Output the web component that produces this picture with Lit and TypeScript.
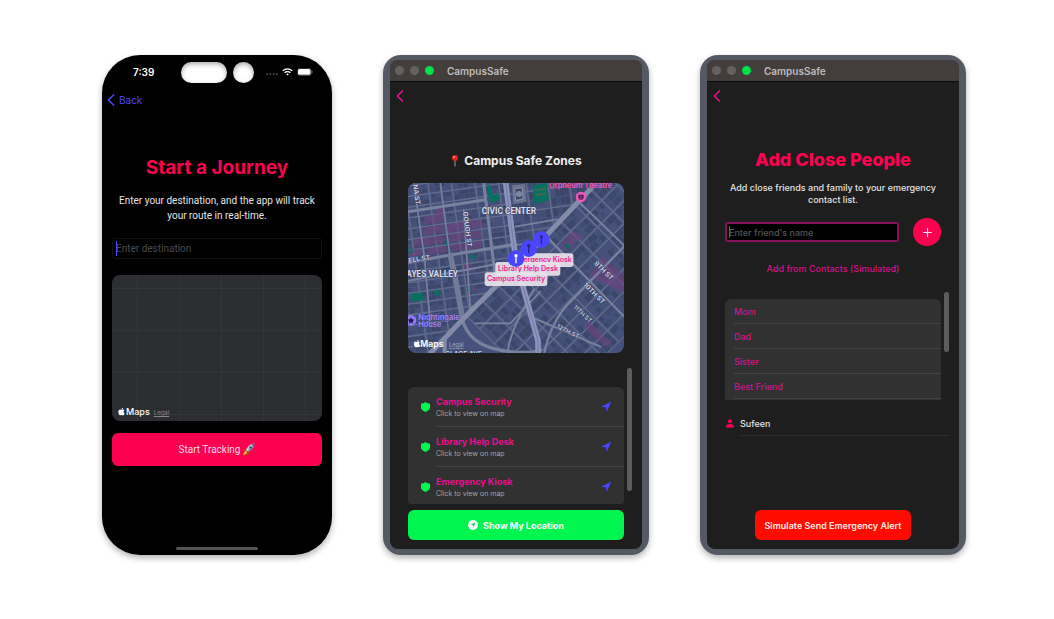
import { LitElement, html, svg, css } from "lit";
import { customElement } from "lit/decorators.js";

const shared = css`
  :host {
    display: block;
    font-family: Inter, "Open Sans", "Liberation Sans", sans-serif;
    --rose: #ff0050;
    --magenta: #e6108c;
    --blue: #4b45ff;
  }
  * {
    box-sizing: border-box;
  }
  h1, h2, p, ul {
    margin: 0;
    padding: 0;
  }
  ul {
    list-style: none;
  }
  button, input {
    font: inherit;
    color: inherit;
    border: 0;
    margin: 0;
    padding: 0;
    background: none;
    cursor: pointer;
  }
  input {
    display: block;
    cursor: text;
    outline: none;
    width: 100%;
  }
  svg {
    display: block;
    flex: none;
  }
`;

const apple = (size: number) => svg`
  <svg width=${size} height=${size} viewBox="0 0 24 24" fill="#fff" aria-hidden="true">
    <path d="M17.6 12.7c0-2.6 2.1-3.9 2.2-4-1.200-1.800-3.100-2-3.800-2-1.600-.2-3.100 1-3.900 1s-2.100-1-3.400-1c-1.700 0-3.400 1-4.300 2.600-1.800 3.200-.5 7.900 1.300 10.400.9 1.300 1.900 2.700 3.300 2.600 1.300-.1 1.800-.8 3.400-.8s2.100.8 3.500.8 2.300-1.300 3.200-2.500c1-1.500 1.400-2.900 1.400-3-.1 0-2.900-1-2.900-4.100z"/>
    <path d="M15 5c.7-.9 1.200-2.100 1.100-3.300-1 0-2.300.7-3 1.600-.7.7-1.200 2-1.100 3.100 1.100.1 2.300-.6 3-1.400z"/>
  </svg>`;

const chevron = html`
  <svg width="8" height="12" viewBox="0 0 8 12" fill="none" stroke="currentColor" stroke-width="1.700" stroke-linecap="round" stroke-linejoin="round" aria-hidden="true">
    <path d="M6.500 1 1.300 6l5.200 5"/>
  </svg>`;

@customElement("journey-phone")
class JourneyPhone extends LitElement {
  static styles = [shared, css`
    .phone {
      min-height: 500px;
      height: 100%;
      display: flex;
      flex-direction: column;
      padding: 6px 10px 5px;
      border-radius: 38px;
      background: #000;
      color: #e4e4e4;
      box-shadow: 0 3px 6px rgba(0, 0, 0, 0.3);
    }
    .status {
      display: flex;
      align-items: center;
      height: 22px;
      padding: 0 9px;
    }
    .time {
      flex: 1;
      text-indent: 12px;
      font-size: 10px;
      font-weight: 600;
      color: #fff;
    }
    .island {
      display: flex;
      gap: 6px;
    }
    .pill, .lens {
      height: 21px;
      width: 46px;
      border-radius: 11px;
      background: #fff;
      box-shadow: inset 0 2px 5px rgba(0, 0, 0, 0.35);
    }
    .lens {
      width: 21px;
    }
    .signals {
      flex: 1;
      min-width: 0;
      display: flex;
      justify-content: flex-end;
      align-items: center;
      gap: 4px;
    }
    .back {
      display: flex;
      align-items: center;
      align-self: flex-start;
      gap: 4px;
      height: 20px;
      margin: 7px 0 0 -5px;
      font-size: 10px;
      color: var(--blue);
    }
    h1 {
      margin-top: 46px;
      font-size: 19px;
      line-height: 24px;
      font-weight: 700;
      text-align: center;
      color: var(--rose);
    }
    .lead {
      margin-top: 13px;
      font-family: Roboto, Inter, sans-serif;
      font-size: 10px;
      line-height: 15px;
      text-align: center;
    }
    .field {
      position: relative;
      margin-top: 15px;
      border: 1px solid #121214;
      border-radius: 3px;
      padding: 0 3px;
    }
    .field input {
      height: 19px;
      font-family: Roboto, Inter, sans-serif;
      font-size: 10px;
    }
    .field input::placeholder {
      color: #4a4a4d;
      opacity: 1;
    }
    .caret {
      position: absolute;
      left: 3px;
      top: 2px;
      width: 1px;
      height: 15px;
      background: var(--blue);
    }
    .map {
      display: flex;
      align-items: flex-end;
      height: 146px;
      margin-top: 16px;
      padding: 0 5px 4px;
      border-radius: 8px;
      background-color: #2c2d30;
      background-image:
        linear-gradient(#30363a 1px, transparent 1px),
        linear-gradient(90deg, #30363a 1px, transparent 1px),
        linear-gradient(#2d2e31 1px, transparent 1px),
        linear-gradient(90deg, #2d2e31 1px, transparent 1px);
      background-size: 42px 42px, 42px 42px, 4px 4px, 4px 4px;
      background-position: 0 13px, 25px 0, 0 0, 0 0;
    }
    .brand {
      display: flex;
      align-items: center;
      font-size: 9px;
      line-height: 11px;
      font-weight: 500;
      color: #fff;
    }
    .legal {
      margin-left: 4px;
      font-size: 6px;
      line-height: 9px;
      color: #85858a;
    }
    .start {
      display: flex;
      align-items: center;
      justify-content: center;
      gap: 2px;
      height: 33px;
      margin-top: 12px;
      border-radius: 6px;
      background: var(--rose);
      font-family: Roboto, Inter, sans-serif;
      font-size: 10px;
      color: #ffd9e4;
    }
    .home {
      width: 82px;
      height: 3px;
      margin: auto auto 0;
      border-radius: 2px;
      background: #545454;
    }
  `];

  render() {
    return html`
      <section class="phone" aria-label="Start a Journey">
        <div class="status">
          <span class="time">7:39</span>
          <span class="island"><span class="pill"></span><span class="lens"></span></span>
          <span class="signals">
            <svg width="12" height="10" viewBox="0 0 12 10" fill="#4c4c4c" aria-hidden="true">
              <circle cx="1.200" cy="7" r=".9"/><circle cx="4.400" cy="7" r=".9"/><circle cx="7.600" cy="7" r=".9"/><circle cx="10.800" cy="7" r=".9"/>
            </svg>
            <svg width="11" height="8" viewBox="0 0 11 8" fill="none" stroke="#fff" stroke-width="1.300" aria-hidden="true">
              <path d="M.8 2.900a6.700 6.700 0 0 1 9.400 0M2.600 4.800a4.100 4.100 0 0 1 5.800 0"/>
              <path d="M4.200 6.200a1.800 1.800 0 0 1 2.600 0L5.500 7.600z" fill="#fff" stroke="none"/>
            </svg>
            <svg width="16" height="8" viewBox="0 0 16 8" aria-hidden="true">
              <rect x=".3" y=".3" width="13.900" height="7.200" rx="2.200" fill="none" stroke="#666" stroke-width=".6"/>
              <rect x="1" y="1" width="12.500" height="5.800" rx="1.500" fill="#fff"/>
              <path d="M15 2.800v2.400" stroke="#777"/>
            </svg>
          </span>
        </div>
        <button class="back">${chevron}<span>Back</span></button>
        <h1>Start a Journey</h1>
        <p class="lead">Enter your destination, and the app will track your route in real-time.</p>
        <div class="field">
          <input type="text" aria-label="Destination" placeholder="Enter destination" />
          <span class="caret"></span>
        </div>
        <div class="map">
          <span class="brand">${apple(9)}Maps</span>
          <a class="legal" href="#legal">Legal</a>
        </div>
        <button class="start">
          <span>Start Tracking</span>
          <svg width="13" height="13" viewBox="0 0 26 26" aria-hidden="true">
            <path d="M7 15 1 24l3-1 1 2 7-6z" fill="#ff9d1c"/>
            <path d="M7 16 3.500 22l5.500-3z" fill="#ffe14a"/>
            <path d="M10 10 3 13l-1 4 8-1zM16 16l-3 7-4 1 1-8z" fill="#c8382c"/>
            <path d="M25 1c-6 0-12 4-17 13l4 4c9-5 13-11 13-17z" fill="#8b98a8"/>
            <path d="M8 14c5-9 11-13 17-13L10 16z" fill="#c9d3de"/>
            <path d="M25 1l-6 1.500 4.500 4.500z" fill="#4b5f86"/>
            <circle cx="17" cy="9" r="2.500" fill="#1d4f8f"/>
          </svg>
        </button>
        <div class="home"></div>
      </section>`;
  }
}

@customElement("mac-window")
class MacWindow extends LitElement {
  static styles = [shared, css`
    :host {
      display: flex;
    }
    .frame {
      flex: 1;
      min-width: 0;
      min-height: 500px;
      display: flex;
      flex-direction: column;
      padding: 5px 7px 6px;
      border-radius: 18px;
      background: #555963;
      box-shadow: 0 3px 6px rgba(0, 0, 0, 0.3);
    }
    .bar {
      display: flex;
      align-items: center;
      gap: 6px;
      height: 22px;
      padding: 0 5px;
      border-bottom: 1px solid #0a0a0a;
      border-radius: 7px 7px 0 0;
      background: #433d3c;
    }
    .dot {
      width: 9px;
      height: 9px;
      border-radius: 50%;
      background: #666160;
    }
    .dot.on {
      background: #00e048;
    }
    .name {
      margin-left: 7px;
      font-size: 10px;
      line-height: 12px;
      font-weight: 600;
      color: #bfbcbb;
    }
    .body {
      flex: 1;
      display: flex;
      flex-direction: column;
      padding: 8px 18px 9px;
      border-radius: 0 0 8px 8px;
      background: #1e1e1e;
    }
    .back {
      align-self: flex-start;
      margin-left: -12px;
      color: var(--magenta);
    }
  `];

  render() {
    return html`
      <section class="frame">
        <header class="bar">
          <span class="dot"></span><span class="dot"></span><span class="dot on"></span>
          <span class="name">CampusSafe</span>
        </header>
        <div class="body">
          <button class="back" aria-label="Back">${chevron}</button>
          <slot></slot>
        </div>
      </section>`;
  }
}

/* Small repeatable number source, so that the blocks keep the same buildings. */
const noise = (a: number, b: number) => {
  const v = Math.sin(a * 127.1 + b * 311.7) * 43758.5453;
  return v - Math.floor(v);
};

interface Grid { x: number; y: number; cols: number; rows: number; w: number; h: number }

const city = ({ x, y, cols, rows, w, h }: Grid) => {
  const out = [];
  for (let r = 0; r < rows; r++) {
    for (let c = 0; c < cols; c++) {
      const bx = x + c * w;
      const by = y + r * h;
      const n = Math.floor(w / 15);
      for (let i = 0; i < n; i++) {
        for (let j = 0; j < 2; j++) {
          const k = noise(c * 9 + i, r * 7 + j);
          const cell = (w - 10) / n;
          const half = (h - 8) / 2;
          if (k > 0.3) {
            out.push(svg`<rect x=${bx + 5 + i * cell} y=${by + 4 + j * half + (j ? 1 : 0)} width=${cell * (0.55 + k * 0.42)} height=${half * (0.5 + k * 0.45)} fill=${k > 0.6 ? "#3b4769" : "#404c71"}/>`);
          }
        }
      }
      out.push(svg`<rect x=${bx} y=${by} width=${w} height=${h} fill="none" stroke="#646d8c" stroke-width="3"/>`);
    }
  }
  return out;
};

const places = ["Campus Security", "Library Help Desk", "Emergency Kiosk"];

const labels = [
  { x: 335, y: 230, w: 184, text: places[2], cx: 426 },
  { x: 285, y: 256, w: 195, text: places[1], cx: 383 },
  { x: 253, y: 287, w: 188, text: places[0], cx: 347 },
];

const pins = [[423, 189], [385, 216], [347, 246]];

@customElement("city-map")
class CityMap extends LitElement {
  static styles = [shared, css`
    .canvas {
      width: 100%;
      height: auto;
      border-radius: 8px;
    }
    text {
      font-family: Inter, "Open Sans", sans-serif;
    }
    .street {
      font-size: 20px;
      font-weight: 600;
      fill: #d3d7e6;
      stroke: #3b4567;
      stroke-width: 3px;
      paint-order: stroke;
    }
    .thin {
      font-size: 18px;
      font-weight: 500;
    }
    .area {
      font-family: Roboto, sans-serif;
      font-size: 25px;
      font-weight: 700;
      fill: #d9dcea;
      stroke: #3b4567;
      stroke-width: 3px;
      paint-order: stroke;
    }
    .spot {
      font-size: 22px;
      font-weight: 700;
      stroke: #353c5e;
      stroke-width: 2px;
      paint-order: stroke;
    }
    .tag {
      font-size: 21px;
      font-weight: 600;
      fill: #f01c92;
    }
    .brand {
      font-size: 26px;
      font-weight: 600;
      fill: #fff;
    }
    .legal {
      font-size: 17px;
      fill: #a3a9c0;
      text-decoration: underline;
    }
  `];

  render() {
    return html`
      <svg class="canvas" viewBox="23 19 648 510" role="img" aria-label="Map of campus safe zones">
        <defs>
          <clipPath id="west"><path d="M0 0H318L345 240 335 280 190 425 90 540H0z"/></clipPath>
          <clipPath id="north"><path d="M320 0H600L345 262z"/></clipPath>
          <clipPath id="south"><path d="M680 0H600L350 268 412 500 415 540H680z"/></clipPath>
          <clipPath id="slope"><path d="M335 280 190 425 240 510 300 529H415L400 450z"/></clipPath>
        </defs>
        <rect x="23" y="19" width="648" height="510" fill="#46527b"/>

        <g clip-path="url(#west)">
          <g transform="rotate(-8 150 270)">
            ${city({ x: -22, y: -20, cols: 6, rows: 19, w: 70, h: 32 })}
            <g fill="#70437f" opacity=".62">
              <rect x="92" y="108" width="54" height="26"/>
              <rect x="128" y="84" width="26" height="50"/>
              <rect x="84" y="142" width="62" height="24"/>
              <rect x="52" y="174" width="94" height="22"/>
              <rect x="158" y="142" width="54" height="26"/>
              <rect x="158" y="174" width="100" height="22"/>
              <rect x="218" y="142" width="46" height="24"/>
              <rect x="88" y="206" width="58" height="20"/>
              <rect x="158" y="206" width="94" height="20"/>
              <rect x="30" y="204" width="40" height="20"/>
              <rect x="190" y="270" width="26" height="20"/>
              <rect x="194" y="334" width="24" height="18"/>
              <rect x="118" y="462" width="56" height="66"/>
              <rect x="158" y="440" width="22" height="36"/>
            </g>
            <g fill="#08705f">
              <rect x="20" y="334" width="36" height="24"/>
              <rect x="92" y="334" width="14" height="16"/>
              <rect x="193" y="336" width="12" height="12"/>
              <rect x="148" y="190" width="7" height="36"/>
              <rect x="214" y="244" width="12" height="12"/>
              <rect x="30" y="200" width="16" height="14" opacity=".6"/>
            </g>
          </g>
        </g>

        <g clip-path="url(#north)">
          <g transform="rotate(-8 345 240)">
            ${city({ x: 280, y: -64, cols: 5, rows: 7, w: 64, h: 58 })}
          </g>
        </g>
        <path d="M258 28l12-3 6 30 20-4 4 20-32 7z" fill="#087060"/>
        <path d="M335 26l38-5 6 54-40 8z" fill="#69728e"/>
        <path d="M343 36l22-3 3 34-22 4z" fill="#3d496b" stroke="#a4a9bd" stroke-width="2"/>
        <circle cx="356" cy="52" r="9" fill="#7d86a2"/>
        <path d="M398 26l42-7 6 52-44 11z" fill="#087060"/>
        <path d="M404 41l34-5M406 55l32-5" stroke="#566a46" stroke-width="4"/>

        <g clip-path="url(#south)">
          <g transform="rotate(-45 345 260)">
            ${city({ x: 200, y: 262, cols: 8, rows: 8, w: 66, h: 48 })}
          </g>
          <g fill="#70437f" opacity=".62">
            <path d="M522 162l24 18-50 42-18-16z"/>
            <path d="M606 240l64 54-2 54-54-28-48-20z"/>
            <path d="M560 430l48 42-22 18-34-40z"/>
            <path d="M596 470l40 26-16 16-30-24z"/>
          </g>
          <path d="M491 208l10-8 8 8-10 9z" fill="#087060"/>
        </g>
        <g clip-path="url(#slope)">
          <g transform="rotate(-45 345 260)">
            ${city({ x: 130, y: 262, cols: 3, rows: 6, w: 66, h: 62 })}
          </g>
        </g>

        <g fill="none" stroke="#78819e" stroke-linecap="round">
          <path d="M23 105 250 70" stroke-width="9"/>
          <path d="M250 19 285 300" stroke-width="9"/>
          <path d="M23 258 150 235 345 202" stroke-width="9"/>
          <path d="M23 312 290 262" stroke-width="6"/>
          <path d="M120 19 148 232 168 320 186 425" stroke-width="5"/>
          <path d="M150 235 170 330 186 425" stroke-width="17" stroke="#717a97"/>
          <path d="M186 428Q205 500 290 518T420 520" stroke-width="10"/>
          <path d="M190 100 210 400" stroke-width="5"/>
          <path d="M40 19 72 240 90 440" stroke-width="5"/>
          <path d="M225 440H330L420 345" stroke-width="5"/>
          <path d="M322 529Q325 470 400 340" stroke-width="6"/>
          <path d="M432 529Q450 440 505 380L671 210" stroke-width="7"/>
          <path d="M400 424 600 510" stroke-width="6"/>
          <path d="M440 180 671 420M540 80 671 206" stroke-width="6"/>
          <path d="M345 150 470 128M345 205 440 192" stroke-width="5"/>
        </g>
        <path d="M598 8 440 174 345 272 190 425 88 532" fill="none" stroke="#838ba8" stroke-width="15"/>
        <path d="M133 480V529" stroke="#838ba8" stroke-width="12"/>
        <g fill="none" stroke-linejoin="round">
          <path d="M315 12 345 240 372 345 413 492V534" stroke="#8e94be" stroke-width="17"/>
          <path d="M315 12 345 240 372 345 413 492V534" stroke="#646d98" stroke-width="2"/>
        </g>

        <text class="area" x="244" y="112">CIVIC CENTER</text>
        <text class="area" x="18" y="300">AYES VALLEY</text>
        <text class="street" transform="translate(38 24) rotate(82)">NA ST</text>
        <text class="street" transform="translate(188 106) rotate(83)">GOUGH ST</text>
        <text class="street" transform="translate(25 258) rotate(-8)">ELL ST</text>
        <text class="street" transform="translate(580 261) rotate(45)">9TH ST</text>
        <text class="street" transform="translate(548 326) rotate(45)">10TH ST</text>
        <text class="street thin" transform="translate(518 393) rotate(43)">11TH ST</text>
        <text class="street thin" transform="translate(468 453) rotate(27)">12TH ST</text>
        <text class="street" x="134" y="539">GLACE AVE</text>

        <text class="spot" x="446" y="34" fill="#f555ba">Orpheum Theatre</text>
        <circle cx="542" cy="61" r="16" fill="#f555ba"/>
        <path d="M534 54h16v9q-1 6-8 7-7-1-8-7z" fill="#46234e"/>
        <path d="M538 59h3M544 59h3M539 64q3 3 6 0" stroke="#f555ba" stroke-width="2" fill="none"/>
        <circle cx="32" cy="431" r="16" fill="#9278ff"/>
        <path d="M32 421l3 7 7 1-5 5 1 7-6-4-6 4 1-7-5-5 7-1z" fill="#1f1a45"/>
        <text class="spot" fill="#9b83ff" x="54" y="429">Nightingale</text>
        <text class="spot" fill="#9b83ff" x="54" y="452">House</text>

        ${labels.map(l => svg`
          <rect x=${l.x} y=${l.y} width=${l.w} height="41" rx="8" fill="#e6e2ea" fill-opacity=".93"/>
          <text class="tag" x=${l.cx} y=${l.y + 27} text-anchor="middle">${l.text}</text>`)}
        ${pins.map(([x, y], i) => svg`
          <circle cx=${x} cy=${y} r="25" fill="#4b45ff"/>
          <g fill="none" stroke=${i === 2 ? "#fff" : "#29258f"} stroke-width="4">
            <circle cx=${x} cy=${y - 9} r="5" fill=${i === 2 ? "#fff" : "#29258f"} stroke="none"/>
            <path d=${`M${x} ${y - 6}V${y + 14}`}/>
          </g>`)}

        <svg x="40" y="488" width="20" height="25" viewBox="3 1 18 22">${apple(24)}</svg>
        <text class="brand" x="60" y="511">Maps</text>
        <text class="legal" x="146" y="511">Legal</text>
      </svg>`;
  }
}

@customElement("safe-zones")
class SafeZones extends LitElement {
  static styles = [shared, css`
    :host {
      flex: 1;
      display: flex;
      flex-direction: column;
    }
    h2 {
      display: flex;
      align-items: center;
      justify-content: center;
      gap: 4px;
      margin-top: 51px;
      font-size: 12px;
      line-height: 16px;
      font-weight: 700;
      color: #eee;
    }
    city-map {
      margin-top: 14px;
    }
    .zones {
      position: relative;
      margin-top: 34px;
    }
    .list {
      height: 117px;
      overflow: hidden;
      border-radius: 6px 6px 3px 3px;
      background: #313131;
    }
    .row {
      display: flex;
      align-items: stretch;
      gap: 6px;
      width: 100%;
      height: 40px;
      padding-left: 13px;
      text-align: left;
    }
    .row > svg {
      align-self: center;
    }
    .info {
      flex: 1;
      display: flex;
      align-items: center;
      padding-right: 12px;
      border-bottom: 1px solid #434343;
    }
    .words {
      flex: 1;
    }
    .name, .hint {
      display: block;
    }
    .name {
      font-size: 9px;
      line-height: 13px;
      font-weight: 700;
      color: var(--magenta);
    }
    .hint {
      font-size: 7px;
      line-height: 11px;
      color: #a2a2a2;
    }
    .scroll {
      position: absolute;
      top: -19px;
      right: -8px;
      width: 5px;
      height: 123px;
      border-radius: 3px;
      background: #5c5c5c;
    }
    .locate {
      display: flex;
      align-items: center;
      justify-content: center;
      gap: 5px;
      height: 30px;
      margin-top: auto;
      border-radius: 6px;
      background: #00f64f;
      font-size: 9px;
      font-weight: 700;
      color: #fff;
    }
  `];

  render() {
    return html`
      <h2>
        <svg width="10" height="14" viewBox="0 0 20 28" aria-hidden="true">
          <path d="M10 12v12" stroke="#9a9a9a" stroke-width="2" stroke-linecap="round"/>
          <circle cx="10" cy="8" r="6" fill="#e3241c"/>
          <circle cx="8" cy="6" r="2" fill="#ff9a8e"/>
        </svg>
        Campus Safe Zones
      </h2>
      <city-map></city-map>
      <div class="zones">
        <ul class="list">
          ${places.map(name => html`
            <li>
              <button class="row">
                <svg width="9" height="10" viewBox="0 0 18 20" aria-hidden="true">
                  <path d="M9 0q4 3 8 3 1 0 1 2v7q0 4-9 8-9-4-9-8V5q0-2 1-2 4 0 8-3z" fill="#00f64f"/>
                </svg>
                <span class="info">
                  <span class="words">
                    <span class="name">${name}</span>
                    <span class="hint">Click to view on map</span>
                  </span>
                  <svg width="11" height="11" viewBox="0 0 22 22" aria-hidden="true">
                    <path d="M20.500 1.500 12 20.500q-1 1-1.400-.5l-.3-7.600-8.600-.6q-1.200-.6 0-1.300z" fill="#4b45ff"/>
                  </svg>
                </span>
              </button>
            </li>`)}
        </ul>
        <span class="scroll"></span>
      </div>
      <button class="locate">
        <svg width="10" height="10" viewBox="0 0 20 20" aria-hidden="true">
          <circle cx="10" cy="10" r="10" fill="#fff"/>
          <path d="M15 5 10.800 15.200l-1-5-5-1z" fill="#00d846"/>
        </svg>
        Show My Location
      </button>`;
  }
}

@customElement("close-people")
class ClosePeople extends LitElement {
  static styles = [shared, css`
    :host {
      flex: 1;
      display: flex;
      flex-direction: column;
      color: #e2e2e2;
    }
    h1 {
      margin-top: 46px;
      font-size: 18px;
      line-height: 24px;
      font-weight: 800;
      text-align: center;
      color: var(--rose);
    }
    .lead {
      margin-top: 10px;
      font-size: 9px;
      line-height: 12px;
      font-weight: 500;
      text-align: center;
    }
    .entry {
      display: flex;
      align-items: center;
      gap: 14px;
      margin-top: 12px;
    }
    .field {
      position: relative;
      flex: 1;
      padding: 0 2px;
      border: 2px solid #8a0f5a;
      border-radius: 3px;
      background: #000;
    }
    .field input {
      height: 16px;
      font-size: 9px;
      font-weight: 500;
    }
    .field input::placeholder {
      color: #555;
      opacity: 1;
    }
    .caret {
      position: absolute;
      left: 2px;
      top: 2px;
      width: 1px;
      height: 12px;
      background: var(--blue);
    }
    .add {
      display: grid;
      place-items: center;
      width: 28px;
      height: 28px;
      border-radius: 50%;
      background: var(--rose);
      color: #ffe3ec;
    }
    .import {
      align-self: center;
      margin-top: 16px;
      font-size: 9px;
      line-height: 13px;
      font-weight: 500;
      color: #d3138a;
    }
    .contacts {
      position: relative;
      margin-top: 24px;
    }
    .list {
      height: 101px;
      overflow: hidden;
      padding-left: 9px;
      border-radius: 6px 6px 0 0;
      background: #313131;
    }
    .pick {
      display: block;
      width: 100%;
      height: 25px;
      border-bottom: 1px solid #444;
      font-size: 9px;
      font-weight: 500;
      text-align: left;
      color: #d3138a;
    }
    .scroll {
      position: absolute;
      top: -7px;
      right: -8px;
      width: 5px;
      height: 60px;
      border-radius: 3px;
      background: #5c5c5c;
    }
    .person {
      display: flex;
      align-items: center;
      gap: 6px;
      margin: 11px -8px 0 1px;
    }
    .who {
      flex: 1;
      padding: 6px 0 5px;
      border-bottom: 1px solid #2d2d2d;
      font-size: 9px;
      line-height: 13px;
      font-weight: 500;
    }
    .alert {
      align-self: center;
      height: 30px;
      margin-top: auto;
      padding: 0 9px;
      border-radius: 6px;
      background: #ff0b00;
      font-size: 9px;
      font-weight: 600;
      color: #ffeae8;
      white-space: nowrap;
    }
  `];

  render() {
    return html`
      <h1>Add Close People</h1>
      <p class="lead">Add close friends and family to your emergency contact list.</p>
      <div class="entry">
        <div class="field">
          <input type="text" aria-label="Friend's name" placeholder="Enter friend's name" />
          <span class="caret"></span>
        </div>
        <button class="add" aria-label="Add friend">
          <svg width="9" height="9" viewBox="0 0 9 9" stroke="currentColor" stroke-width="1.200" stroke-linecap="round" aria-hidden="true">
            <path d="M4.500.6v7.800M.6 4.500h7.800"/>
          </svg>
        </button>
      </div>
      <button class="import">Add from Contacts (Simulated)</button>
      <div class="contacts">
        <ul class="list">
          ${["Mom", "Dad", "Sister", "Best Friend"].map(n => html`<li><button class="pick">${n}</button></li>`)}
        </ul>
        <span class="scroll"></span>
      </div>
      <div class="person">
        <svg width="8" height="9" viewBox="0 0 16 18" fill="#ff0050" aria-hidden="true">
          <circle cx="8" cy="4.500" r="4.200"/>
          <path d="M0 15.500q0-5.500 8-5.500t8 5.500q0 1.500-1.500 1.500h-13Q0 17 0 15.500z"/>
        </svg>
        <span class="who">Sufeen</span>
      </div>
      <button class="alert">Simulate Send Emergency Alert</button>`;
  }
}

@customElement("app-root")
class AppRoot extends LitElement {
  static styles = [shared, css`
    :host {
      min-height: 100vh;
      background: #fff;
    }
    .stage {
      display: grid;
      grid-template-columns: 230fr 266fr 266fr;
      gap: 51px;
      padding: 55px 88px 64px 102px;
    }
  `];

  render() {
    return html`
      <main class="stage">
        <journey-phone></journey-phone>
        <mac-window><safe-zones></safe-zones></mac-window>
        <mac-window><close-people></close-people></mac-window>
      </main>`;
  }
}
